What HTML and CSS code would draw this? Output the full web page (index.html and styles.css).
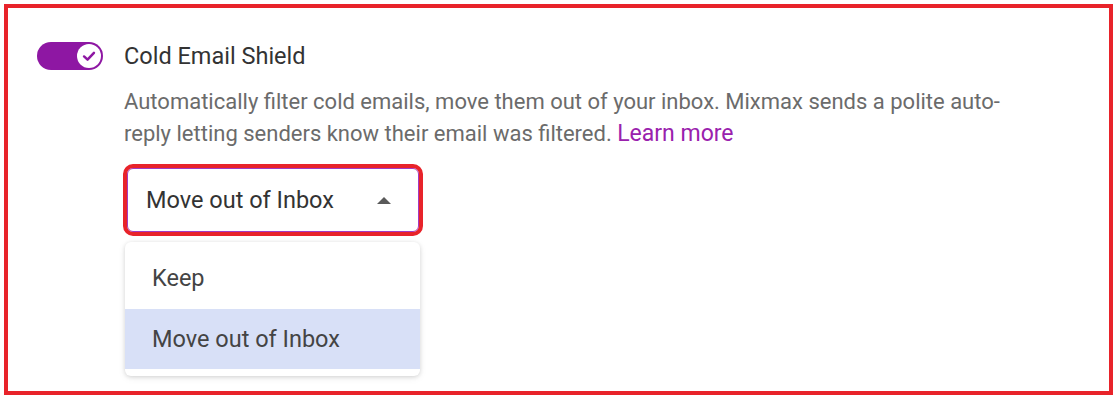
FILE: index.html
```html
<!DOCTYPE html>
<html>
<head>
<meta charset="utf-8">
<link rel="stylesheet" href="styles.css">
</head>
<body>
<div class="frame">
  <div class="setting">
    <div class="toggle">
      <span class="knob">
        <svg width="18" height="18" viewBox="0 0 16 16"><path d="M3.6 8.4 L6.7 11.3 L12.4 5.2" fill="none" stroke="#8e17a3" stroke-width="2.2" stroke-linecap="round" stroke-linejoin="round"/></svg>
      </span>
    </div>
    <div class="content">
      <div class="title">Cold Email Shield</div>
      <p class="desc">Automatically filter cold emails, move them out of your inbox. Mixmax sends a polite auto-reply letting senders know their email was filtered. <a class="link" href="#">Learn more</a></p>
      <div class="select-wrap">
        <div class="select">
          <span class="value">Move out of Inbox</span>
          <span class="caret"></span>
        </div>
        <ul class="menu">
          <li class="item">Keep</li>
          <li class="item selected">Move out of Inbox</li>
        </ul>
      </div>
    </div>
  </div>
</div>
</body>
</html>
```

FILE: styles.css
```css
html, body {
  margin: 0;
  padding: 0;
  background: #ffffff;
}
body {
  font-family: Roboto, "Liberation Sans", Arial, sans-serif;
  width: 1117px;
  height: 397px;
  overflow: hidden;
}
.frame {
  box-sizing: border-box;
  margin: 4px 0 0 4px;
  width: 1109px;
  height: 391px;
  border: 4px solid #e8232a;
  padding: 34px 0 0 29px;
}
.setting {
  display: flex;
  align-items: flex-start;
  gap: 21px;
}
.toggle {
  position: relative;
  width: 66px;
  height: 28px;
  border-radius: 14px;
  background: #8e17a3;
  flex: none;
}
.knob {
  position: absolute;
  right: 2px;
  top: 2px;
  width: 24px;
  height: 24px;
  border-radius: 50%;
  background: #ffffff;
  display: flex;
  align-items: center;
  justify-content: center;
}
.content {
  display: flex;
  flex-direction: column;
}
.title {
  font-size: 23.5px;
  line-height: 28px;
  color: #333333;
}
.desc {
  margin: 16px 0 0 0;
  width: 900px;
  font-size: 22px;
  line-height: 32px;
  color: #6b6b6b;
}
.link {
  color: #9a21ad;
  text-decoration: none;
  font-size: 23px;
  line-height: 28px;
}
.select-wrap {
  position: relative;
  margin-top: 18px;
  margin-left: 3px;
  width: 292px;
}
.select {
  box-sizing: border-box;
  height: 64px;
  border: 1px solid #a33bc2;
  border-radius: 6px;
  outline: 4px solid #e8232a;
  background: #fff;
  display: flex;
  align-items: center;
  justify-content: space-between;
  padding: 0 27px 0 18px;
}
.value {
  font-size: 23.5px;
  color: #333333;
}
.caret {
  width: 0;
  height: 0;
  border-left: 7px solid transparent;
  border-right: 7px solid transparent;
  border-bottom: 7px solid #5a5a5a;
}
.menu {
  position: absolute;
  left: -2px;
  top: 74px;
  width: 295px;
  margin: 0;
  padding: 0 0 7px 0;
  list-style: none;
  background: #ffffff;
  border-radius: 6px;
  box-shadow: 0 1px 4px rgba(0,0,0,0.14), 0 2px 8px rgba(0,0,0,0.06);
  overflow: hidden;
}
.item {
  height: 60px;
  display: flex;
  align-items: center;
  padding-left: 27px;
  font-size: 23.5px;
  color: #444444;
}
.item:first-child {
  height: 67px;
  padding-top: 4px;
  box-sizing: border-box;
}
.item.selected {
  background: #d8e0f7;
}
```
